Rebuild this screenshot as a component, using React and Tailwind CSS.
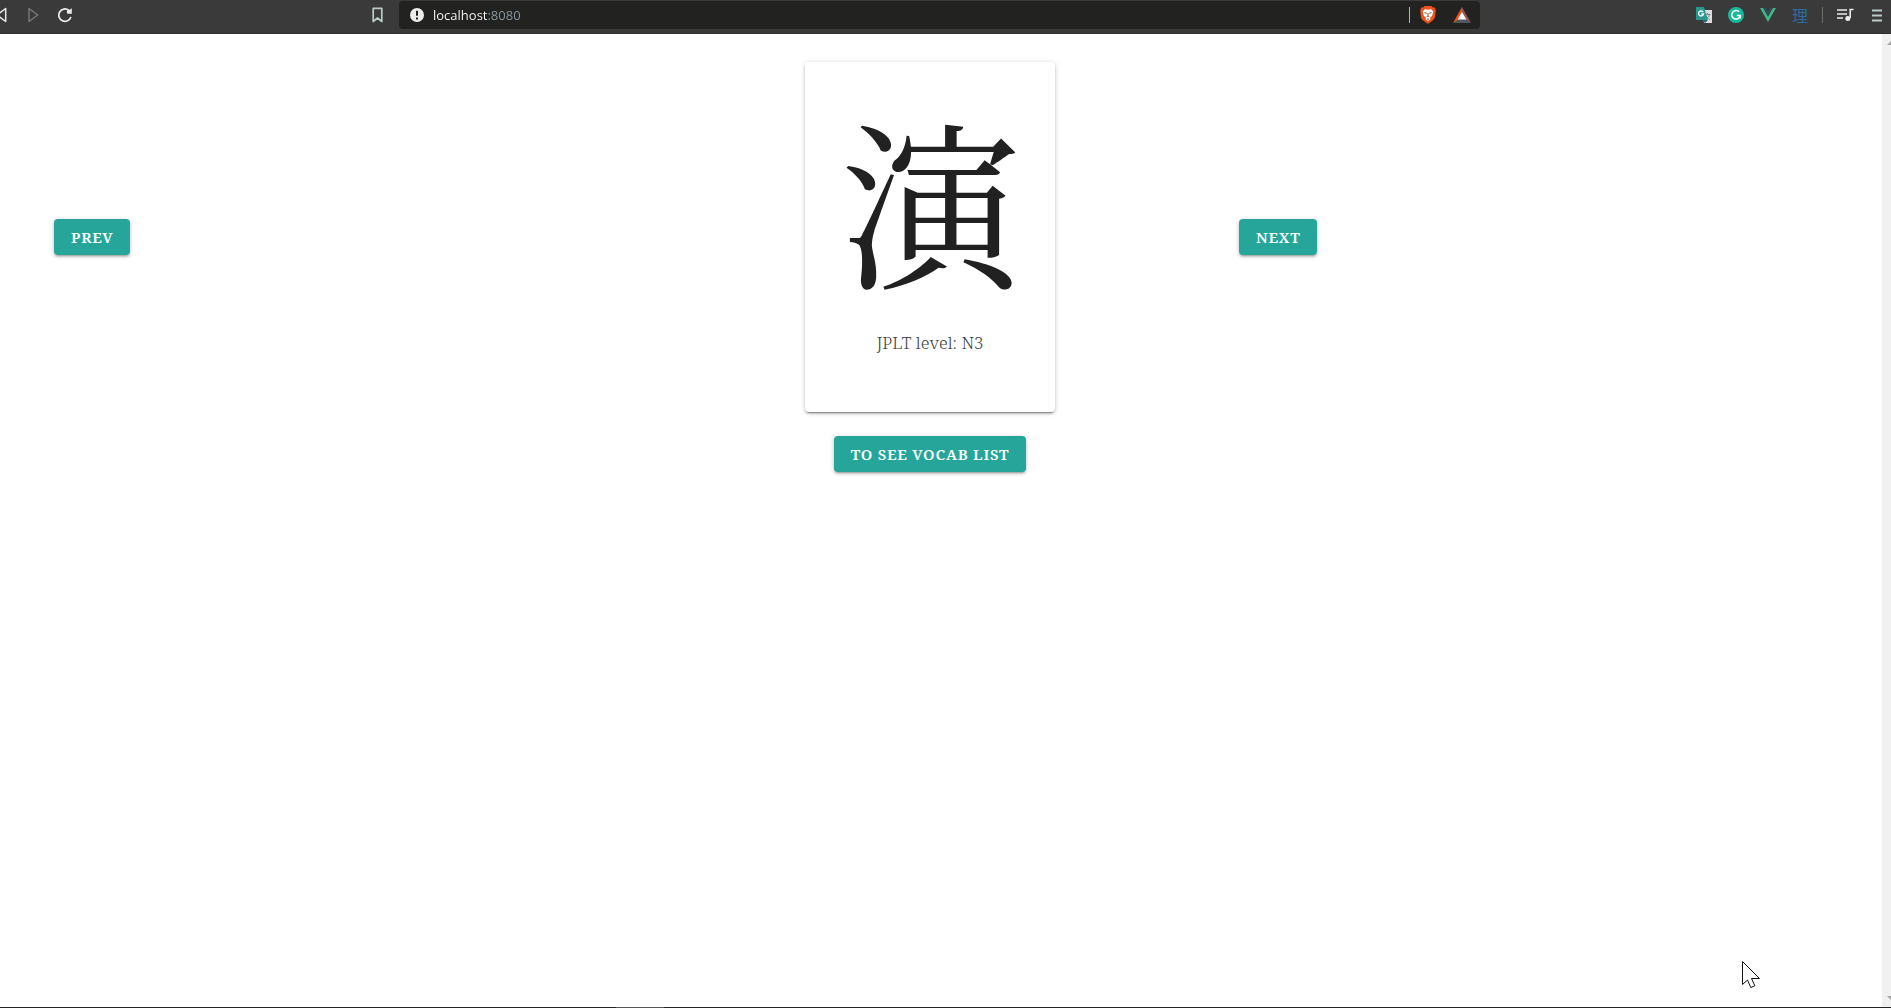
import React from "react";

const teal =
  "h-9 rounded bg-[#26a69a] px-[17px] font-['Noto_Serif','Liberation_Serif',serif] text-[15px] font-semibold uppercase leading-9 tracking-wider text-white shadow-[0_2px_2px_rgba(0,0,0,0.14),0_3px_1px_-2px_rgba(0,0,0,0.12),0_1px_5px_rgba(0,0,0,0.2)]";

function Toolbar() {
  return (
    <header className="grid h-[34px] shrink-0 grid-cols-[399fr_1081fr_411fr] border-b border-[#332d33] bg-[#3a3a3a] pb-1 pt-px">
      <nav className="flex items-center overflow-hidden pr-4">
        <button aria-label="Back" className="w-[7px] overflow-hidden">
          <svg width="7" height="16" viewBox="0 0 7 16" fill="none" stroke="#e6e6e6" strokeWidth="1.5" strokeLinejoin="round">
            <path d="M5.7 1.5v13L-3 8z" />
          </svg>
        </button>
        <button aria-label="Forward" className="ml-[21px]">
          <svg width="11" height="16" viewBox="0 0 11 16" fill="none" stroke="#77777a" strokeWidth="1.5" strokeLinejoin="round">
            <path d="M1 1.5v13L9.700 8z" />
          </svg>
        </button>
        <button aria-label="Reload" className="ml-[19px]">
          <svg width="14" height="16" viewBox="0 0 14 16">
            <path d="M10.800 3.300A6.200 6.200 0 1 0 12.900 10" fill="none" stroke="#ececec" strokeWidth="1.700" />
            <path d="M13.800 1.200v5.600H9.600c-1.500-2-.5-4.800 2-4z" fill="#ececec" />
          </svg>
        </button>
        <button aria-label="Bookmark" className="ml-auto">
          <svg width="11" height="16" viewBox="0 0 11 16" fill="none" stroke="#b9cbc8" strokeWidth="1.700" strokeLinejoin="round">
            <path d="M1.200 1.300h8.600v13.200L5.500 11l-4.300 3.500z" />
          </svg>
        </button>
      </nav>
      <div className="flex items-center rounded bg-[#222220] pl-[11px] pr-[9px]">
        <svg className="shrink-0" width="14" height="14" viewBox="0 0 14 14">
          <circle cx="7" cy="7" r="7" fill="#ededed" />
          <path d="M7 2.800v5" stroke="#222220" strokeWidth="2" />
          <path d="M7 9.400v2" stroke="#222220" strokeWidth="2" />
        </svg>
        <input
          aria-label="Address"
          defaultValue="localhost:8080"
          className="ml-[9px] min-w-0 flex-1 bg-[linear-gradient(90deg,#ffffff_55px,#8b9aa0_55px)] bg-clip-text font-['Segoe_UI','Open_Sans',sans-serif] text-[13px] leading-5 text-transparent outline-none"
        />
        <span className="mr-[10px] h-4 w-px bg-[#b5b5b5]" />
        <button aria-label="Brave Shields">
          <svg width="16" height="18" viewBox="0 0 16 18">
            <path d="M4.5 0h7l1.3 1.4 1.8-.1 1.2 3-.7 6.2c-.5 2.8-2.2 4-7.1 7.3C3.1 14.500.9 13.300.9 10.500L.2 4.300l1.200-3 1.800.1z" fill="#f0501a" />
            <path d="M5 3l3 .8L11 3l2.300 2.500-1.100 4.300L10 12l.5 1.200L8 15l-2.500-1.800L6 12 3.800 9.800 2.700 5.500z" fill="#fff" />
            <path d="M4.500 6.500l2.300.8M11.500 6.500l-2.300.8M8 7v3M6.500 11L8 10l1.500 1M7 13h2" fill="none" stroke="#9a5138" />
          </svg>
        </button>
        <button aria-label="Brave Rewards" className="ml-[17px]">
          <svg width="18" height="16" viewBox="0 0 18 16">
            <path d="M9 0L0 16l9-5z" fill="#f0501a" />
            <path d="M9 0l9 16-9-5z" fill="#955259" />
            <path d="M0 16l9-5 9 5z" fill="#4d5963" />
            <path d="M9 5l4.300 7.500H4.700z" fill="#fff" />
          </svg>
        </button>
      </div>
      <div className="flex items-center justify-end pr-[9px]">
        <button aria-label="Google Translate">
          <svg width="16" height="16" viewBox="0 0 16 16">
            <path d="M6 3h10v13H8z" fill="#dddddf" />
            <path d="M8.500 7.500h6M11.500 6v1.500M13.500 7.500c-.5 2.500-2.200 4-4 5M9.800 8.500c1 2 2.500 3 4 4" fill="none" stroke="#7d8587" />
            <path d="M0 0h8l3.800 13H0z" fill="#29978b" />
            <path d="M6 13h6l-3 3z" fill="#2c6576" />
            <path d="M7.200 5.200A2.500 2.500 0 1 0 7.500 7H5.300" fill="none" stroke="#f4ffff" strokeWidth="1.300" />
          </svg>
        </button>
        <button aria-label="Grammarly" className="ml-4">
          <svg width="16" height="16" viewBox="0 0 16 16">
            <circle cx="8" cy="8" r="8" fill="#18b89b" />
            <path d="M11.200 4.800A4.300 4.300 0 1 0 12.300 8.600H8.800M12.300 8.300v3" fill="none" stroke="#fff" strokeWidth="1.500" />
          </svg>
        </button>
        <button aria-label="Vue devtools" className="ml-4">
          <svg width="16" height="14" viewBox="0 0 16 14">
            <path d="M0 0h3.200L8 8.500 12.800 0H16L8 14z" fill="#41b883" />
            <path d="M3.200 0H6l2 3.400L10 0h2.800L8 8.500z" fill="#35495e" />
          </svg>
        </button>
        <button aria-label="Dictionary" className="ml-4 font-['Noto_Sans_CJK_JP',sans-serif] text-base leading-4 text-[#2d6b9e]">
          理
        </button>
        <span className="ml-[14px] h-4 w-px bg-[#6c6c6c]" />
        <button aria-label="Playlist" className="ml-[14px]">
          <svg width="17" height="14" viewBox="0 0 17 14" fill="none" stroke="#ececec" strokeWidth="1.600">
            <path d="M0 2h10M0 6h10M0 10h6M16.500 1.500h-3.300V10" />
            <circle cx="10.800" cy="10.500" r="2.500" fill="#ececec" stroke="none" />
          </svg>
        </button>
        <button aria-label="Menu" className="ml-[18px]">
          <svg width="10" height="13" viewBox="0 0 10 13" stroke="#b9cbc8" strokeWidth="2">
            <path d="M0 1.500h10M0 6.500h10M0 11.500h10" />
          </svg>
        </button>
      </div>
    </header>
  );
}

export default function App() {
  return (
    <div className="flex min-h-screen flex-col bg-white">
      <Toolbar />
      <div className="relative flex flex-1">
        <main className="flex-1 pl-[3px] pr-[25px] pt-7">
          <div className="grid grid-cols-3 items-center">
            <div className="pl-[51px]">
              <button className={teal}>Prev</button>
            </div>
            <article className="flex h-[350px] w-[250px] flex-col items-center justify-self-center rounded bg-white pt-[45px] shadow-[0_2px_2px_rgba(0,0,0,0.14),0_3px_1px_-2px_rgba(0,0,0,0.3),0_1px_5px_rgba(0,0,0,0.2)]">
              <h1 lang="ja" className="font-['Noto_Serif_CJK_JP','Noto_Sans_CJK_JP',serif] text-[180px] font-normal leading-[180px] text-[#212121]">
                演
              </h1>
              <p className="mt-[42px] font-['Noto_Serif','Liberation_Serif',serif] text-[17px] font-light leading-7 text-[#424242]">JPLT level: N3</p>
            </article>
            <div>
              <button className={teal}>Next</button>
            </div>
          </div>
          <div className="mt-6 flex justify-center">
            <button className={teal}>To see vocab list</button>
          </div>
        </main>
        <div className="flex w-[9px] flex-col items-end justify-between overflow-hidden bg-[#f1f1f1] py-[7px]">
          <svg width="4" height="4" viewBox="0 0 4 4" fill="#a3a3a3">
            <path d="M0 4l4-4v4z" />
          </svg>
          <svg width="4" height="4" viewBox="0 0 4 4" fill="#a3a3a3">
            <path d="M0 0h4v4z" />
          </svg>
        </div>
        <svg className="absolute bottom-[18px] right-[130px]" width="20" height="29" viewBox="0 0 20 29" fill="#fff" stroke="#111">
          <path d="M1.500 1.500v23l5-4.500 3.300 7.500 4-1.700L10.500 18.500h8z" />
        </svg>
      </div>
      <div className="flex h-px bg-[#252527]">
        <span className="ml-[32.600%] w-12 bg-[#555]" />
      </div>
    </div>
  );
}
